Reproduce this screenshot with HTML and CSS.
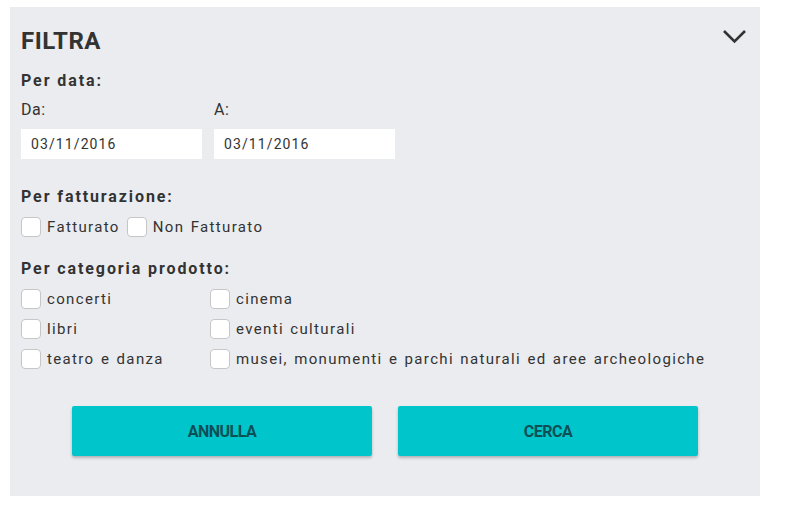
FILE: index.html
```html
<!DOCTYPE html>
<html lang="it">
<head>
  <meta charset="UTF-8">
  <meta name="viewport" content="width=device-width, initial-scale=1.0">
  <title>Filtra</title>
  <link rel="stylesheet" href="styles.css">
</head>
<body>
  <div class="filter">
    <div class="filter-head">
      <h2>FILTRA</h2>
      <svg class="chevron" width="25" height="15" viewBox="0 0 25 15">
        <polyline points="2,2 12.5,12.5 23,2" fill="none" stroke="#333" stroke-width="2.6"/>
      </svg>
    </div>

    <h3 class="group-title first">Per data:</h3>
    <div class="dates">
      <div class="field">
        <label>Da:</label>
        <input type="text" value="03/11/2016">
      </div>
      <div class="field">
        <label>A:</label>
        <input type="text" value="03/11/2016">
      </div>
    </div>

    <h3 class="group-title">Per fatturazione:</h3>
    <div class="inline-checks">
      <label class="check"><span class="box"></span>Fatturato</label>
      <label class="check"><span class="box"></span>Non Fatturato</label>
    </div>

    <h3 class="group-title after-checks">Per categoria prodotto:</h3>
    <div class="check-grid">
      <label class="check"><span class="box"></span>concerti</label>
      <label class="check"><span class="box"></span>cinema</label>
      <label class="check"><span class="box"></span>libri</label>
      <label class="check"><span class="box"></span>eventi culturali</label>
      <label class="check"><span class="box"></span>teatro e danza</label>
      <label class="check"><span class="box"></span>musei, monumenti e parchi naturali ed aree archeologiche</label>
    </div>

    <div class="actions">
      <button class="btn">ANNULLA</button>
      <button class="btn">CERCA</button>
    </div>
  </div>
</body>
</html>
```

FILE: styles.css
```css
body {
  margin: 0;
  padding: 7px 0 0 10px;
  background-color: #fff;
  font-family: Roboto, 'Liberation Sans', sans-serif;
  color: #333;
}
.filter {
  width: 750px;
  box-sizing: border-box;
  background-color: #ebecf0;
  padding: 19px 11px 40px 11px;
}
.filter-head {
  display: flex;
  justify-content: space-between;
  align-items: flex-start;
  height: 30px;
}
.filter-head h2 {
  margin: 0;
  font-size: 24px;
  line-height: 30px;
  font-weight: 700;
  letter-spacing: 0.5px;
  color: #333;
}
.chevron {
  margin: 3px 2px 0 0;
}
.group-title {
  margin: 28px 0 0;
  font-size: 16px;
  line-height: 20px;
  font-weight: 700;
  letter-spacing: 1.9px;
}
.group-title.first {
  margin-top: 15px;
}
.group-title.after-checks {
  margin-top: 22px;
}
.dates {
  display: flex;
  gap: 12px;
  margin-top: 9px;
}
.field {
  display: flex;
  flex-direction: column;
  gap: 9px;
  width: 181px;
}
.field label {
  font-size: 16px;
  line-height: 20px;
  letter-spacing: 0.5px;
}
.field input {
  height: 30px;
  box-sizing: border-box;
  border: none;
  background-color: #fff;
  padding: 0 10px;
  font-family: inherit;
  font-size: 14px;
  letter-spacing: 1.1px;
  color: #333;
  outline: none;
}
.inline-checks {
  display: flex;
  gap: 7px;
  margin-top: 10px;
}
.check {
  display: flex;
  align-items: center;
  gap: 6px;
  height: 20px;
  font-size: 15px;
  letter-spacing: 1.35px;
  word-spacing: 1.3px;
  color: #333;
}
.box {
  width: 18px;
  height: 18px;
  border: 1px solid #c6c6c6;
  border-radius: 4px;
  background-color: #fff;
}
.check-grid {
  display: grid;
  grid-template-columns: 189px 1fr;
  row-gap: 10px;
  margin-top: 10px;
}
.actions {
  display: flex;
  justify-content: center;
  gap: 26px;
  margin-top: 37px;
}
.btn {
  width: 300px;
  height: 50px;
  border: none;
  border-radius: 2px;
  background-color: #00c5ca;
  box-shadow: 0 2px 3px rgba(0, 0, 0, 0.25);
  color: #0c4f57;
  font-family: Roboto, 'Liberation Sans', sans-serif;
  font-size: 16px;
  font-weight: 700;
  letter-spacing: -0.5px;
  cursor: pointer;
}
```
